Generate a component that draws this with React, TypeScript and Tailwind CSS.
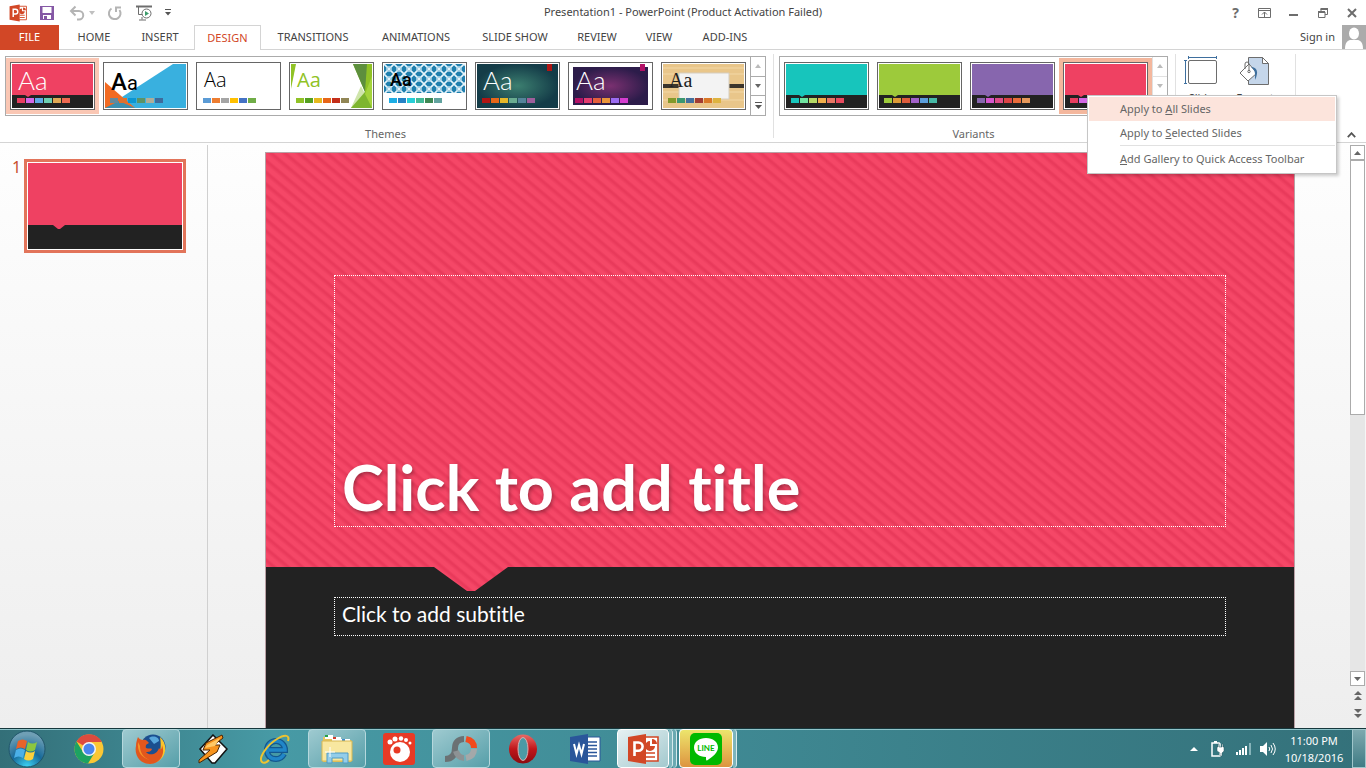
import { useState } from 'react';
import type { ReactNode } from 'react';
import clsx from 'clsx';

type Theme = {
  name: string;
  aa: string;
  colors: string[];
  art: ReactNode;
};

const darkBand = (fill: string) => (
  <>
    <rect width="81" height="44" fill="#222" />
    <rect width="81" height="31" fill={fill} />
    <path d="M13 31h6l-3 2z" fill={fill} />
  </>
);

const THEMES: Theme[] = [
  {
    name: 'Badge',
    aa: 'font-[Lato] font-light text-[26px] text-white',
    colors: ['#e83d5f', '#d367e6', '#5ea9e6', '#6ccfb1', '#e0a955', '#ee6850'],
    art: darkBand('#ef4162'),
  },
  {
    name: 'Angles',
    aa: 'font-[Roboto] text-xl text-black first-letter:text-2xl first-letter:font-medium',
    colors: ['#64899b', '#e0702d', '#0b96d3', '#5b9367', '#b0ad98', '#3d6b9c'],
    art: (
      <>
        <rect width="81" height="44" fill="#fff" />
        <path d="M0 44 68 0h13v44z" fill="#39b0df" />
        <path d="M0 44V18l30 26z" fill="#f26b22" />
        <path d="M0 44 14 37 30 44z" fill="#3d8fae" />
      </>
    ),
  },
  {
    name: 'Office Theme',
    aa: 'font-["Open_Sans"] font-light text-xl text-black',
    colors: ['#5b9bd5', '#ed7d31', '#a5a5a5', '#ffc000', '#4472c4', '#70ad47'],
    art: <rect width="81" height="44" fill="#fff" />,
  },
  {
    name: 'Facet',
    aa: 'font-["Open_Sans"] text-xl text-[#90c226]',
    colors: ['#90c226', '#54a021', '#e6b91e', '#e76618', '#c42f1a', '#918655'],
    art: (
      <>
        <rect width="81" height="44" fill="#fff" />
        <path d="M0 0h5L0 25z" fill="#90c226" />
        <path d="M62 0h19v44H60l14-16z" fill="#90c226" />
        <path d="M62 0h14l-2 28z" fill="#5d8f3d" />
        <path d="M60 44 70 22l4 8-6 14z" fill="#cfe5ab" />
        <path d="M60 44 74 28l7 6v10z" fill="#7db52f" />
        <path d="M81 12 74 30l7 14z" fill="#a4d43c" />
      </>
    ),
  },
  {
    name: 'Integral',
    aa: 'font-[Roboto] font-medium text-lg text-black',
    colors: ['#1cade4', '#2683c6', '#27ced7', '#42ba97', '#3e8853', '#62a39f'],
    art: (
      <>
        <defs>
          <pattern id="integral" width="10" height="10" patternUnits="userSpaceOnUse">
            <rect width="10" height="10" fill="#1f7fae" />
            <path d="M0 0 10 10M10 0 0 10" stroke="#e4f3fa" strokeWidth="1.6" />
            <circle cx="5" cy="5" r="2.4" fill="none" stroke="#b5dced" />
          </pattern>
        </defs>
        <rect width="81" height="44" fill="#fff" />
        <rect width="81" height="29" fill="url(#integral)" />
      </>
    ),
  },
  {
    name: 'Ion',
    aa: 'font-[Lato] font-light text-[26px] text-white',
    colors: ['#b01513', '#e76618', '#e6b729', '#6aac90', '#54849a', '#9e5e9b'],
    art: (
      <>
        <defs>
          <radialGradient id="ion">
            <stop offset="0" stopColor="#3c7f70" />
            <stop offset="1" stopColor="#143c48" />
          </radialGradient>
        </defs>
        <rect width="81" height="44" fill="url(#ion)" />
        <path d="M70 0h5v7h-5z" fill="#b01513" />
      </>
    ),
  },
  {
    name: 'Ion Boardroom',
    aa: 'font-[Lato] font-light text-[26px] text-white',
    colors: ['#b31166', '#e33d6f', '#e45f3c', '#e9943a', '#9b6bf2', '#d53dd0'],
    art: (
      <>
        <defs>
          <radialGradient id="boardroom">
            <stop offset="0" stopColor="#7a3070" />
            <stop offset="1" stopColor="#2c1c4a" />
          </radialGradient>
        </defs>
        <rect width="81" height="44" fill="#fff" />
        <rect x="3" y="3" width="75" height="38" fill="url(#boardroom)" />
        <path d="M70 0h5v7h-5z" fill="#b31166" />
      </>
    ),
  },
  {
    name: 'Organic',
    aa: 'font-["Liberation_Serif"] text-xl text-[#212121]',
    colors: ['#83992a', '#3c9770', '#44709d', '#a23c33', '#d97828', '#deb340'],
    art: (
      <>
        <rect width="81" height="44" fill="#e9c68a" />
        <path d="M0 4h81M0 10h81M0 28h81M0 36h81" stroke="#eecf98" strokeWidth="2" />
        <path d="M0 20h81v4H0z" fill="#3b352c" />
        <path d="M16 9h50v26H16z" fill="#f3f3f3" stroke="#d5cdbf" />
      </>
    ),
  },
];

const VARIANTS = [
  { fill: '#17c5bc', colors: ['#17c5bc', '#6fe3a0', '#b5d965', '#f0ae4b', '#e87664', '#e74a5f'] },
  { fill: '#9dca3b', colors: ['#9dca3b', '#dd9a37', '#dd5c3c', '#a261c9', '#5b9edb', '#46b9a6'] },
  { fill: '#8766ae', colors: ['#8766ae', '#d557cd', '#dd4c87', '#db4445', '#e96c3a', '#e6985a'] },
  { fill: '#ef4162', colors: ['#e83d5f', '#d367e6', '#5ea9e6', '#6ccfb1', '#e0a955', '#ee6850'] },
];

const TABS = [
  { label: 'HOME', width: 'w-16' },
  { label: 'INSERT', width: 'w-[68px]' },
  { label: 'DESIGN', width: 'w-[67px]' },
  { label: 'TRANSITIONS', width: 'w-[104px]' },
  { label: 'ANIMATIONS', width: 'w-[102px]' },
  { label: 'SLIDE SHOW', width: 'w-[96px]' },
  { label: 'REVIEW', width: 'w-[68px]' },
  { label: 'VIEW', width: 'w-[56px]' },
  { label: 'ADD-INS', width: 'w-[76px]' },
];

function PowerPointIcon({ size }: { size: number }) {
  return (
    <svg width={size} height={size} viewBox="0 0 32 32">
      <path d="M15 4h16v24H15z" fill="#fff" stroke="#d24726" strokeWidth="1.6" />
      <path d="M23 8a5 5 0 1 0 5 5h-5z" fill="#d24726" />
      <path d="M25 6a5 5 0 0 1 5 5h-5z" fill="#d24726" />
      <path d="M19 20h9M19 24h9" stroke="#d24726" strokeWidth="1.6" />
      <path d="M1 4 19 1v30L1 28z" fill="#d24726" />
      <path d="M7.500 23V9.500h4a4 4 0 0 1 0 8.200h-4" fill="none" stroke="#fff" strokeWidth="2.600" />
    </svg>
  );
}

function TitleBar() {
  return (
    <header className="grid h-[25px] grid-cols-[1fr_auto_1fr] items-center text-[#444]">
      <div className="flex items-center pl-[9px]">
        <PowerPointIcon size={18} />
        <button aria-label="Save" className="ml-3">
          <svg width="16" height="16" viewBox="0 0 16 16">
            <path d="M1 1h14v14H1z" fill="#8558a5" />
            <path d="M3.500 2h9v6h-9zM4 10h8v4H4z" fill="#fff" />
            <path d="M5 11h3v3H5z" fill="#8558a5" />
          </svg>
        </button>
        <button aria-label="Undo" className="ml-3.5 flex items-center gap-1">
          <svg width="16" height="16" viewBox="0 0 16 16" fill="none" stroke="#b4b4b4" strokeWidth="2">
            <path d="M2 6h8a4 4 0 0 1 0 8.500H8M6.500 1.500 2 6l4.500 4.500" />
          </svg>
          <svg width="6" height="4" viewBox="0 0 6 4"><path d="M0 0h6L3 4z" fill="#c0c0c0" /></svg>
        </button>
        <button aria-label="Repeat" className="ml-3">
          <svg width="16" height="16" viewBox="0 0 16 16" fill="none" stroke="#b4b4b4" strokeWidth="2">
            <path d="M4.500 3.500a5.800 5.800 0 1 0 8 1.500M9 7V2.500h5" />
          </svg>
        </button>
        <button aria-label="Start From Beginning" className="ml-3">
          <svg width="18" height="16" viewBox="0 0 18 16" fill="none" stroke="#6d6d6d">
            <path d="M1 1.500h16" strokeWidth="2" />
            <path d="M3.500 2v7.500H8M7 12v2.500M4 15h7" />
            <circle cx="11.500" cy="8.500" r="4.500" fill="#fff" />
            <path d="m10 6 4 2.500-4 2.500z" fill="#3d9c6c" stroke="none" />
          </svg>
        </button>
        <button aria-label="Customize Quick Access Toolbar" className="ml-3">
          <svg width="6" height="7" viewBox="0 0 6 7"><path d="M0 0h6v1H0zM0 3h6L3 6.500z" fill="#555" /></svg>
        </button>
      </div>
      <h1>Presentation1 - PowerPoint (Product Activation Failed)</h1>
      <div className="flex justify-end">
        <button aria-label="Help" className="flex w-[29px] justify-center text-sm font-bold text-[#6d6d6d]">?</button>
        <button aria-label="Ribbon Display Options" className="flex w-[29px] items-center justify-center">
          <svg width="13" height="10" viewBox="0 0 13 10" fill="none" stroke="#6d6d6d">
            <path d="M.5.500h12v9H.5zM.5 2.500h12M6.500 4v5M4 6.500 6.500 4 9 6.500" />
          </svg>
        </button>
        <button aria-label="Minimize" className="flex w-[29px] items-center justify-center">
          <svg width="9" height="6" viewBox="0 0 9 6"><path d="M0 4h9v2H0z" fill="#6d6d6d" /></svg>
        </button>
        <button aria-label="Restore Down" className="flex w-[29px] items-center justify-center">
          <svg width="10" height="10" viewBox="0 0 10 10" fill="none" stroke="#6d6d6d">
            <path d="M.5 4h6.500v5.500H.5zM3 4V1h6.500v5.500H7" />
            <path d="M0 4h7M2.500 1H10" strokeWidth="2" />
          </svg>
        </button>
        <button aria-label="Close" className="flex w-[29px] items-center justify-center">
          <svg width="10" height="10" viewBox="0 0 10 10" stroke="#6d6d6d" strokeWidth="2">
            <path d="m1 1 8 8M9 1 1 9" />
          </svg>
        </button>
      </div>
    </header>
  );
}

function RibbonTabs() {
  const [active, setActive] = useState('DESIGN');
  return (
    <nav className="flex h-[25px] text-[#444]">
      <button className="w-[59px] bg-[#d24726] text-white">FILE</button>
      <div className="w-[3px] border-b border-[#d4d4d4]" />
      {TABS.map((tab) => (
        <button
          key={tab.label}
          onClick={() => setActive(tab.label)}
          className={clsx(
            'border-[#d4d4d4]',
            tab.width,
            active === tab.label ? 'border-x border-t text-[#d24726]' : 'border-b pt-px',
          )}
        >
          {tab.label}
        </button>
      ))}
      <div className="flex flex-1 items-center justify-end gap-[7px] border-b border-[#d4d4d4]">
        <a href="#signin">Sign in</a>
        <svg width="24" height="24" viewBox="0 0 24 24">
          <path d="M0 0h24v24H0z" fill="#ababab" />
          <ellipse cx="12" cy="8.500" rx="5" ry="6" fill="#fff" />
          <path d="M3 24c0-7 3-9 6-9h6c3 0 6 2 6 9z" fill="#fff" />
        </svg>
      </div>
    </nav>
  );
}

type ThumbProps = {
  name: string;
  art: ReactNode;
  colors: string[];
  aa?: string;
  selected: boolean;
  highlight: string;
  onSelect: () => void;
};

function Thumb({ name, art, colors, aa, selected, highlight, onSelect }: ThumbProps) {
  return (
    <button
      aria-label={name}
      onClick={onSelect}
      className={clsx('flex h-14 w-[93px] items-center justify-center', selected && highlight)}
    >
      <span className="relative h-12 w-[85px] border border-[#666] bg-white p-px">
        <svg width="81" height="44" viewBox="0 0 81 44">{art}</svg>
        {aa && <span className={clsx('absolute left-[7px] top-[3px] block leading-7', aa)}>Aa</span>}
        <span className="absolute bottom-1.5 left-1.5 flex gap-px">
          {colors.map((c) => (
            <span key={c} className="h-[5px] w-2" style={{ background: c }} />
          ))}
        </span>
      </span>
    </button>
  );
}

function GalleryScroll({ canScroll }: { canScroll: boolean }) {
  return (
    <div
      className={clsx(
        'flex w-[15px] flex-col divide-y border-l',
        canScroll ? 'divide-[#ababab] border-[#ababab]' : 'divide-[#e1e1e1] border-[#e1e1e1]',
      )}
    >
      <button aria-label="Previous row" className="flex flex-1 items-center justify-center">
        <svg width="6" height="4" viewBox="0 0 6 4"><path d="M0 4h6L3 0z" fill="#bbb" /></svg>
      </button>
      <button aria-label="Next row" className="flex flex-1 items-center justify-center">
        <svg width="6" height="4" viewBox="0 0 6 4"><path d="M0 0h6L3 4z" fill={canScroll ? '#666' : '#bbb'} /></svg>
      </button>
      <button aria-label="More" className="flex flex-1 items-center justify-center">
        <svg width="7" height="7" viewBox="0 0 7 7"><path d="M0 0h7v1H0zM0 3h7L3.500 7z" fill="#555" /></svg>
      </button>
    </div>
  );
}

function ContextMenu() {
  return (
    <div
      role="menu"
      className="absolute right-[29px] top-[45px] z-10 w-[250px] border border-[#c6c6c6] bg-white p-px text-[#666] shadow-[2px_2px_3px_rgba(0,0,0,0.2)]"
    >
      <button role="menuitem" className="block h-6 w-full bg-[#fce4dc] pl-[31px] text-left">
        Apply to <u>A</u>ll Slides
      </button>
      <button role="menuitem" className="block h-6 w-full pl-[31px] text-left">
        Apply to <u>S</u>elected Slides
      </button>
      <hr className="ml-[31px] border-[#e1e1e1]" />
      <button role="menuitem" className="block h-[26px] w-full pl-[31px] text-left">
        <u>A</u>dd Gallery to Quick Access Toolbar
      </button>
    </div>
  );
}

function Ribbon() {
  const [theme, setTheme] = useState('Badge');
  const [variant, setVariant] = useState(3);
  return (
    <section className="relative flex h-[93px] border-b border-[#d4d4d4] pt-1 text-[#666]">
      <div className="mb-1 flex flex-col items-center justify-between border-r border-[#e1e1e1] pl-[5px] pr-[7px] pt-0.5">
        <div className="flex border border-[#ababab]">
          <div className="flex py-px">
            {THEMES.map((t) => (
              <Thumb
                key={t.name}
                {...t}
                selected={theme === t.name}
                highlight="bg-[#fac7b4]"
                onSelect={() => setTheme(t.name)}
              />
            ))}
          </div>
          <GalleryScroll canScroll />
        </div>
        <span className="leading-2">Themes</span>
      </div>
      <div className="mb-1 flex flex-col items-center justify-between border-r border-[#e1e1e1] pl-[5px] pr-[7px] pt-0.5">
        <div className="flex border border-[#ababab]">
          <div className="flex py-px">
            {VARIANTS.map((v, i) => (
              <Thumb
                key={v.fill}
                name={`Variant ${i + 1}`}
                art={darkBand(v.fill)}
                colors={v.colors}
                selected={variant === i}
                highlight="bg-[#f4b79d]"
                onSelect={() => setVariant(i)}
              />
            ))}
          </div>
          <GalleryScroll canScroll={false} />
        </div>
        <span className="leading-2">Variants</span>
      </div>
      <div className="mb-1 flex w-[120px] items-start gap-1 border-r border-[#e1e1e1] pt-0.5 text-[#444]">
        <button aria-label="Slide Size" className="flex w-[50px] flex-col items-center">
          <svg width="34" height="30" viewBox="0 0 34 30" fill="none">
            <rect x="4.500" y="4.500" width="28" height="23" rx="1.500" fill="#fff" stroke="#6d6d6d" />
            <path d="M4 1.500h29M4.500 0v3M32.500 0v3M1.500 5v22M0 4.500h3M0 27.500h3" stroke="#3e6f9e" />
          </svg>
          <span className="pt-1.5 leading-3">Slide</span>
        </button>
        <button aria-label="Format Background" className="flex w-[50px] flex-col items-center">
          <svg width="32" height="30" viewBox="0 0 32 30" fill="none" stroke="#6d6d6d">
            <path d="M9.500 1.500h14l6 6v21h-20z" fill="#c5d6ea" />
            <path d="M23.500 1.500v6h6z" fill="#fff" />
            <path d="m1 17 9-9 8 9-9 8z" fill="#fff" />
            <path d="M6 13V8a2 2 0 0 1 4 0v7" />
            <circle cx="10" cy="15.500" r="1.200" />
            <path d="M12 11c6 0 8 5 4 13 0-6 1-9-4-13z" fill="#3e6f9e" stroke="none" />
          </svg>
          <span className="pt-1.5 leading-3">Format</span>
        </button>
      </div>
      <button aria-label="Collapse the Ribbon" className="ml-auto mr-2.5 self-end pb-1">
        <svg width="9" height="6" viewBox="0 0 9 6" fill="none" stroke="#555" strokeWidth="1.800">
          <path d="m.8 5.200 3.700-4 3.700 4" />
        </svg>
      </button>
      <ContextMenu />
    </section>
  );
}

function VerticalScroll() {
  return (
    <div className="flex w-4 flex-col items-start">
      <div className="flex w-[15px] flex-1 flex-col bg-[#e6e6e6]">
        <button aria-label="Scroll up" className="flex h-[15px] items-center justify-center border border-[#ababab] bg-white">
          <svg width="7" height="4" viewBox="0 0 7 4"><path d="M0 4h7L3.500 0z" fill="#666" /></svg>
        </button>
        <div className="h-[255px] border border-[#ababab] bg-white" />
        <button aria-label="Scroll down" className="mt-auto flex h-[15px] items-center justify-center border border-[#ababab] bg-white">
          <svg width="7" height="4" viewBox="0 0 7 4"><path d="M0 0h7L3.500 4z" fill="#666" /></svg>
        </button>
      </div>
      <button aria-label="Previous Slide" className="flex h-[18px] w-[15px] items-center justify-center">
        <svg width="8" height="9" viewBox="0 0 8 9"><path d="M0 4h8L4 0zM0 9h8L4 5z" fill="#666" /></svg>
      </button>
      <button aria-label="Next Slide" className="mb-1.5 flex h-[18px] w-[15px] items-center justify-center">
        <svg width="8" height="9" viewBox="0 0 8 9"><path d="M0 0h8L4 4zM0 5h8L4 9z" fill="#666" /></svg>
      </button>
    </div>
  );
}

function Slide() {
  return (
    <article className="ml-[57px] mr-[55px] mt-[7px] flex-1 border-x border-t border-[#b9a0a5] bg-[#222] text-white [font-variant-ligatures:none]">
      <div className="h-[439px] bg-[repeating-linear-gradient(40deg,#f54767_0px,#f54767_3px,#e93a5b_6px,#e93a5b_7px,#f54767_9px)] px-[68px] pt-[122px] [clip-path:polygon(0_0,100%_0,100%_414px,242px_414px,209px_438px,201px_438px,168px_414px,0_414px)]">
        <div className="flex h-[252px] items-end border border-dotted border-white px-[7px]">
          <h2 className="font-[Lato] text-[63px] font-bold leading-[78px] [text-shadow:1px_2px_4px_rgba(0,0,0,0.35)]">
            Click to add title
          </h2>
        </div>
      </div>
      <div className="mx-[68px] mt-[5px] h-[39px] border border-dotted border-white px-[7px]">
        <p className="font-[Lato] text-[21px] leading-8">Click to add subtitle</p>
      </div>
    </article>
  );
}

function Workspace() {
  return (
    <main className="flex min-h-0 flex-1 overflow-hidden bg-linear-to-b from-[#fefefe] to-[#eeeeee] pt-0.5">
      <aside className="flex w-52 gap-1 border-r border-[#d0d0d0] pl-3 pt-3.5">
        <span className="w-2 text-base leading-4 text-[#c8502f]">1</span>
        <button aria-label="Slide 1" className="h-[94px] w-[162px] border-3 border-[#e2745a] bg-white p-px">
          <svg className="size-full" viewBox="0 0 154 86" preserveAspectRatio="none">
            <path d="M0 0h154v86H0z" fill="#222" />
            <path d="M0 0h154v62H37l-5 4h-2l-5-4H0z" fill="#ef4162" />
          </svg>
        </button>
      </aside>
      <Slide />
      <VerticalScroll />
    </main>
  );
}

const TASKS: { name: string; open?: 'single' | 'stack' | 'alert'; icon: ReactNode }[] = [
  {
    name: 'Google Chrome',
    icon: (
      <svg width="30" height="30" viewBox="0 0 30 30">
        <circle cx="15" cy="15" r="14.500" fill="#fbc734" />
        <path d="M15 15 2.500 7.500A14.500 14.500 0 0 1 27.800 8H15z" fill="#dd4b3e" />
        <path d="M2.500 7.500A14.500 14.500 0 0 0 14 29.500L21 18l-12 0z" fill="#1da362" />
        <circle cx="15" cy="15" r="7" fill="#f4f4f4" />
        <circle cx="15" cy="15" r="5.500" fill="#4a86ee" />
      </svg>
    ),
  },
  {
    name: 'Firefox',
    open: 'single',
    icon: (
      <svg width="32" height="32" viewBox="0 0 32 32">
        <circle cx="18" cy="14" r="12.500" fill="#1b4f8f" />
        <path d="M14 5c4-3 10-1 10 3l-5 3z" fill="#58a7dc" />
        <path d="M25 4c7 6 7 17 0 23-4 3-9 4-13 3 9-1 16-8 13-26z" fill="#fbc52c" />
        <path d="M3 4c1 2 3 3 5 3 3-1 4 1 6 3-2 1-4 2-3 5 2 1 5 0 6 1-1 3-4 3-6 3 3 4 11 3 13-4 2 3 3 0 3-3 4 10-3 19-12 19C5 31-1 22 1 13c0-4 1-6 2-9z" fill="#e2571d" />
        <path d="M3 9c-1 9 3 16 12 18-7-2-10-8-10-14z" fill="#f59327" />
      </svg>
    ),
  },
  {
    name: 'Winamp',
    icon: (
      <svg width="30" height="30" viewBox="0 0 30 30">
        <path d="M15 1 29 15 17 29h-3L2 15z" fill="#fff" stroke="#111" strokeWidth="1.500" />
        <path d="M24 1 8 9 5 16h7L1 26v3l18-11 3-7h-6l9-7z" fill="#f7941e" stroke="#4a2605" />
        <path d="M22 4 9 11l-2 3 10-2z" fill="#ffc966" />
      </svg>
    ),
  },
  {
    name: 'Internet Explorer',
    icon: (
      <svg width="32" height="32" viewBox="0 0 32 32" fill="none">
        <path d="M25 21c-2 4-5 5-8 5-6 0-9-4-9-9s4-9 9-9 9 4 9 9H10" stroke="#14588f" strokeWidth="6" />
        <path d="M25 21c-2 4-5 5-8 5-6 0-9-4-9-9s4-9 9-9 9 4 9 9H10" stroke="#2186c8" strokeWidth="3.500" />
        <path d="M29 8c2-6-3-7-11-2C8 12-1 25 3 29c2 2 5 0 7-2" stroke="#edc331" strokeWidth="2" />
      </svg>
    ),
  },
  {
    name: 'Windows Explorer',
    open: 'single',
    icon: (
      <svg width="34" height="32" viewBox="0 0 34 32">
        <path d="M3 4h12l2 3h14v22H3z" fill="#e6c45f" />
        <path d="M5 2h8v4H5zM12 4h9v4h-9zM21 6h9v4h-9z" fill="#fff" />
        <path d="M5 2h3v2H5z" fill="#26a244" />
        <path d="M13 4h3v2h-3z" fill="#cf4030" />
        <path d="M22 6h3v2h-3z" fill="#3f8bd0" />
        <path d="M2 8h30v20H2z" fill="#f8e7a0" stroke="#d8b850" />
        <path d="M7 30V20h21v10h-5v-5H12v5z" fill="#93cdea" stroke="#4f9bc5" />
        <path d="M10 14v10M5 19h10" stroke="#fff" />
      </svg>
    ),
  },
  {
    name: 'GOM Player',
    icon: (
      <svg width="32" height="32" viewBox="0 0 32 32">
        <rect width="32" height="32" rx="3" fill="#e83a25" />
        <g fill="#fff">
          <circle cx="17" cy="19" r="10" />
          <circle cx="7" cy="9" r="2.500" />
          <circle cx="12" cy="6" r="2.500" />
          <circle cx="18" cy="5.500" r="2.200" />
          <circle cx="23" cy="7" r="2" />
          <circle cx="27" cy="10" r="1.500" />
        </g>
        <circle cx="14" cy="17" r="3.500" fill="#e83a25" />
      </svg>
    ),
  },
  {
    name: 'Screen Recorder',
    open: 'single',
    icon: (
      <svg width="34" height="32" viewBox="0 0 34 32" fill="none" strokeWidth="6">
        <path d="M20 6c-6 0-9 4-9 9 0 7-3 11-10 11" stroke="#6b7173" />
        <path d="M12 18c1 4 4 7 8 7" stroke="#8d9294" />
        <path d="M22 25c5-1 8-4 8-9" stroke="#a4a8a9" />
        <path d="M22 6c5 1 8 4 8 9" stroke="#f24a1d" />
      </svg>
    ),
  },
  {
    name: 'Opera',
    icon: (
      <svg width="30" height="30" viewBox="0 0 30 30">
        <defs>
          <linearGradient id="opera" x1="0" y1="0" x2="0" y2="1">
            <stop offset="0" stopColor="#e86a66" />
            <stop offset=".5" stopColor="#c0161a" />
            <stop offset="1" stopColor="#8c0b10" />
          </linearGradient>
        </defs>
        <ellipse cx="15" cy="15" rx="14" ry="14.500" fill="url(#opera)" />
        <ellipse cx="15" cy="15" rx="5" ry="11.500" fill="#4b9aa5" stroke="#d9b1b1" />
      </svg>
    ),
  },
  {
    name: 'Word',
    icon: (
      <svg width="32" height="32" viewBox="0 0 32 32">
        <path d="M16 4h15v24H16z" fill="#fff" stroke="#2a569a" />
        <path d="M18 9h10M18 12.500h10M18 16h10M18 19.500h10M18 23h10" stroke="#2a569a" strokeWidth="1.500" />
        <path d="M1 4 19 1v30L1 28z" fill="#2a569a" />
        <path d="m5 11 2.500 10L10 12l2.500 9L15 11" fill="none" stroke="#fff" strokeWidth="2" />
      </svg>
    ),
  },
  { name: 'PowerPoint', open: 'stack', icon: <PowerPointIcon size={32} /> },
  {
    name: 'LINE',
    open: 'alert',
    icon: (
      <svg width="32" height="32" viewBox="0 0 32 32">
        <rect width="32" height="32" rx="5" fill="#00b900" />
        <path d="M16 5c7 0 12 4 12 9.500 0 5-5 9-11 13-1 .5-1-1-1-3.500C9 24 4 20 4 14.500S9 5 16 5z" fill="#fff" />
        <text x="16" y="17.500" textAnchor="middle" fontSize="8" fontWeight="700" fontFamily="Lato" fill="#00b900">LINE</text>
      </svg>
    ),
  },
];

function Taskbar() {
  return (
    <footer className="flex h-10 items-stretch border-t border-[#16383d] bg-linear-to-r from-[#336f78] via-[#479aa5] via-20% to-[#34717a] text-white shadow-[inset_0_1px_0_#8fc4ca]">
      <button aria-label="Start" className="flex w-[58px] items-center pl-2">
        <svg width="38" height="38" viewBox="0 0 38 38">
          <defs>
            <radialGradient id="orb" cx=".5" cy="1" r=".9">
              <stop offset="0" stopColor="#3fd6f7" />
              <stop offset=".5" stopColor="#176a9a" />
              <stop offset="1" stopColor="#6f9fb5" />
            </radialGradient>
          </defs>
          <circle cx="19" cy="19" r="18" fill="url(#orb)" stroke="#21566b" />
          <path d="M10 11c3-2 6-2 9 0l-2 8c-3-2-6-2-9 0z" fill="#e8632a" />
          <path d="M20 12c3 2 6 2 9 0l-2 8c-3 2-6 2-9 0z" fill="#8cc63f" />
          <path d="M8 20c3-2 6-2 9 0l-2 8c-3-2-6-2-9 0z" fill="#4bb0e8" />
          <path d="M18 21c3 2 6 2 9 0l-2 8c-3 2-6 2-9 0z" fill="#fbd03c" />
        </svg>
      </button>
      {TASKS.map((task) => (
        <div key={task.name} className="flex w-[62px] px-px">
          <button
            aria-label={task.name}
            className={clsx(
              'flex flex-1 items-center justify-center rounded-sm border',
              !task.open && 'border-transparent',
              task.open === 'single' && 'mx-px border-[#b5d8dd] bg-linear-to-br from-[#9ecad0] to-[#559fa9]',
              task.open === 'stack' && 'border-white bg-linear-to-br from-[#e6f1f3] to-[#a3c9ce]',
              task.open === 'alert' && 'border-white bg-linear-to-b from-[#ece56c] to-[#dc9440]',
            )}
          >
            {task.icon}
          </button>
          {task.open === 'stack' && (
            <>
              <span className="w-1 rounded-r-sm border-r border-[#d5eaec] bg-[#7db5bc]" />
              <span className="w-1 rounded-r-sm border-r border-[#d5eaec] bg-[#6aa9b1]" />
            </>
          )}
          {task.open === 'alert' && <span className="mr-0.5 w-1 rounded-r-sm border-r border-[#d5eaec] bg-[#7db5bc]" />}
        </div>
      ))}
      <div className="ml-auto flex items-center">
        <svg width="8" height="4" viewBox="0 0 8 4"><path d="M0 4h8L4 0z" fill="#fff" /></svg>
        <svg className="ml-3" width="16" height="16" viewBox="0 0 16 16">
          <path d="M2 2h7v1h1v12H2z" fill="none" stroke="#fff" strokeWidth="1.500" />
          <path d="M4 0h3v2H4z" fill="#fff" />
          <path d="M8 3h1v3h3V3h1v3h1v4l-2 2v3H10v-3L7 10V6h1z" fill="#fff" stroke="#2d5b62" strokeWidth=".5" />
        </svg>
        <svg className="ml-2.5" width="16" height="12" viewBox="0 0 16 12" fill="#fff">
          <path d="M0 9h2v3H0zM3 7h2v5H3zM6 5h2v7H6zM9 3h2v9H9z" />
          <path d="M13 0h2v12h-2z" fill="#86b4ba" />
        </svg>
        <svg className="ml-2" width="16" height="14" viewBox="0 0 16 14" fill="none" stroke="#fff">
          <path d="M0 4h3l4-4v14l-4-4H0z" fill="#fff" stroke="none" />
          <path d="M9 5q1.500 2 0 4M11 3q3 4 0 8M13 1q4.500 6 0 12" />
        </svg>
        <div className="flex w-19 flex-col items-center leading-[17px]">
          <time>11:00 PM</time>
          <time>10/18/2016</time>
        </div>
        <button aria-label="Show desktop" className="h-full w-3.5 border border-[#9fc6cb] bg-linear-to-b from-[#7ea9af] to-[#3f7c85]" />
      </div>
    </footer>
  );
}

export default function App() {
  return (
    <div className='flex h-screen min-h-[480px] flex-col overflow-hidden bg-white font-["Noto_Sans",sans-serif] text-[11px]'>
      <TitleBar />
      <RibbonTabs />
      <Ribbon />
      <Workspace />
      <Taskbar />
    </div>
  );
}
